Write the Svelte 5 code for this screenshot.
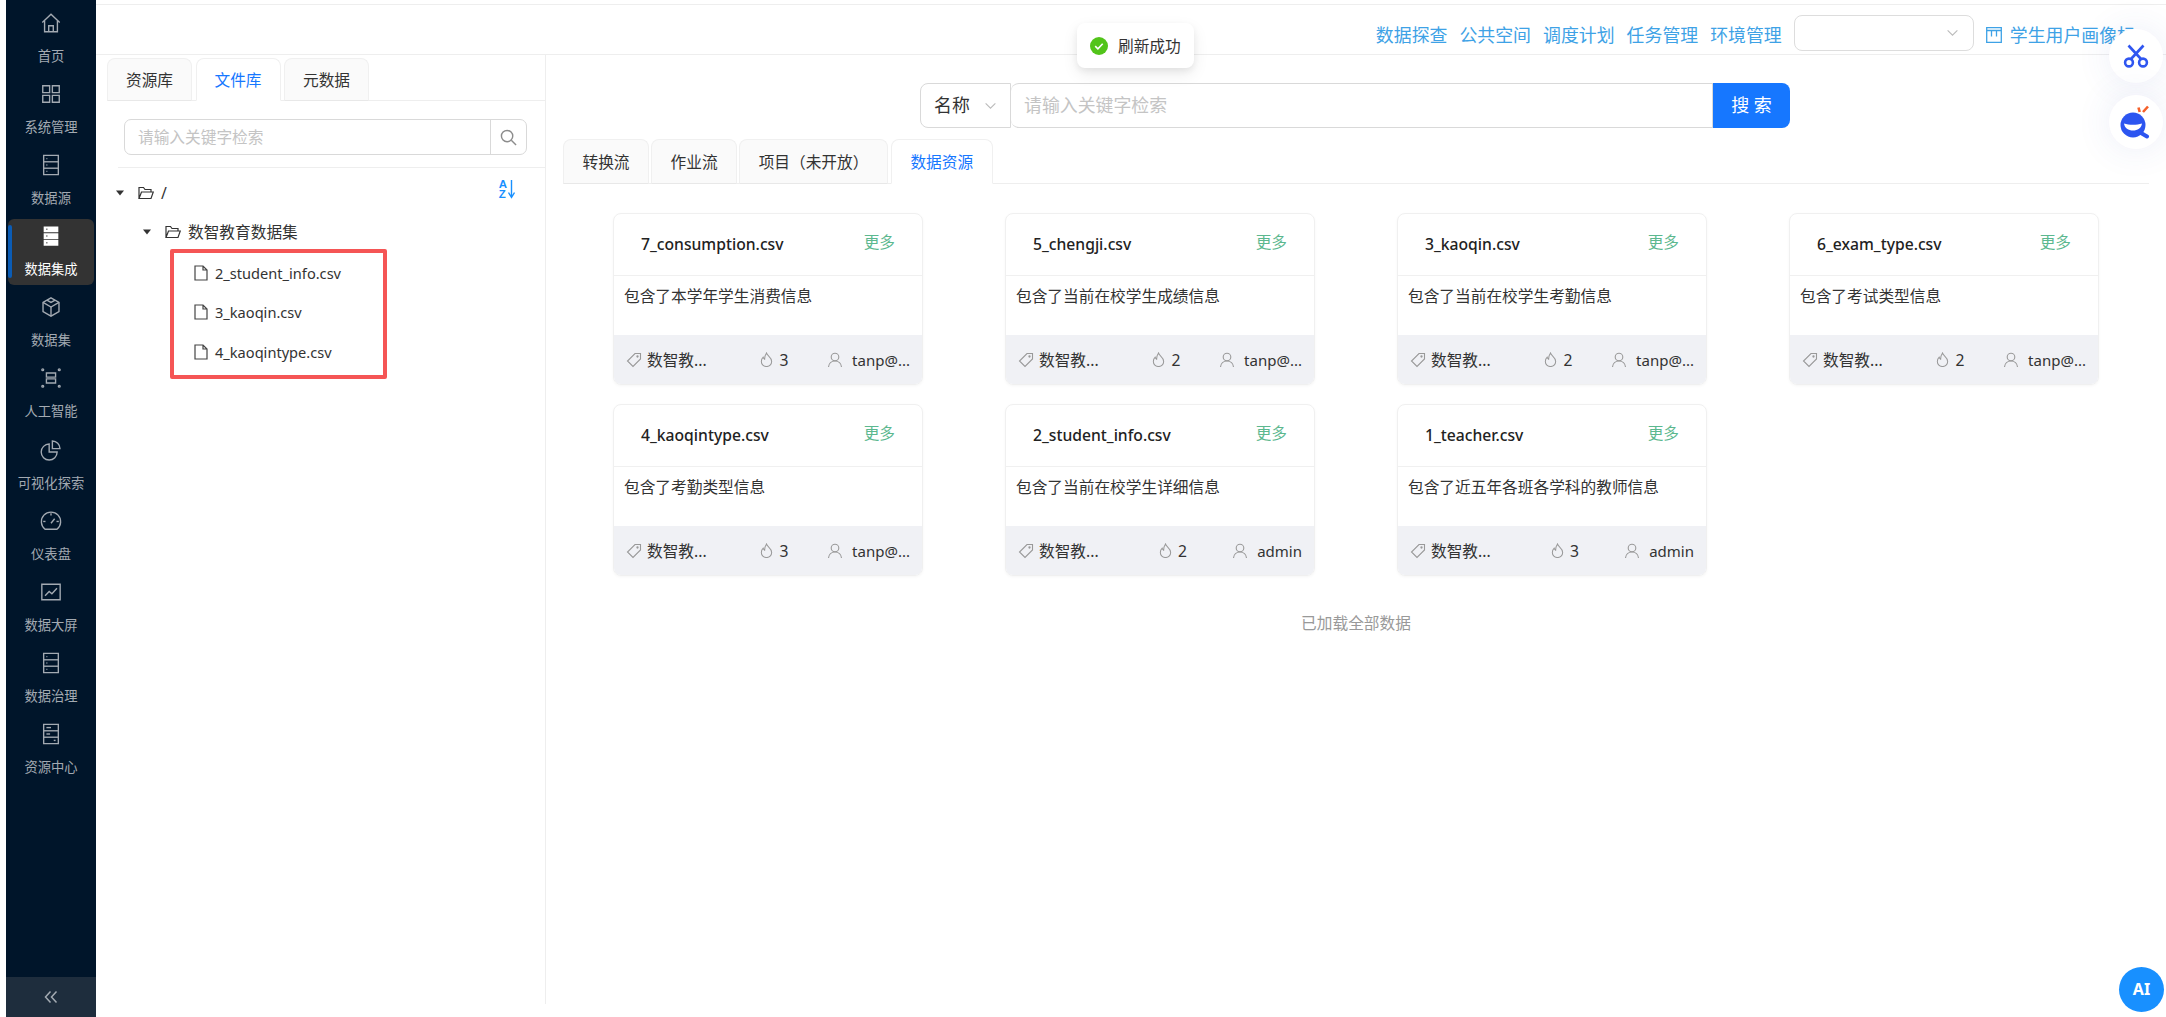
<script>
	const db = ['M4 1.5h16v21H4z', 'M4 8.5h16', 'M4 15.5h16', 'M7 5h1', 'M7 12h1', 'M7 19h1'];

	const menu = [
		{ label: '首页', paths: ['M2.5 11.5 12 2.5l9.5 9', 'M5 9.5V21.5h14V9.5', 'M9.5 21.5V15h5v6.5'] },
		{ label: '系统管理', paths: ['M3 3h7.5v7.5H3z', 'M13.5 3H21v7.5h-7.5z', 'M3 13.5h7.5V21H3z', 'M13.5 13.5H21V21h-7.5z'] },
		{ label: '数据源', paths: db },
		{ label: '数据集成', active: true },
		{ label: '数据集', paths: ['M12 2l8.7 5v10L12 22l-8.7-5V7z', 'M3.3 7 12 12l8.7-5', 'M12 12v10', 'M7.5 4.5 12 7l4.5-2.5'] },
		{
			label: '人工智能',
			paths: [
				'M7 6.5h10v4.500H7z',
				'M7 13h10v4.500H7z',
				'M2 3a1 1 0 1 0 2 0a1 1 0 1 0-2 0',
				'M20 3a1 1 0 1 0 2 0a1 1 0 1 0-2 0',
				'M2 21a1 1 0 1 0 2 0a1 1 0 1 0-2 0',
				'M20 21a1 1 0 1 0 2 0a1 1 0 1 0-2 0'
			]
		},
		{ label: '可视化探索', paths: ['M10 5.5a8.7 8.7 0 1 0 8.7 8.7H10z', 'M13.5 2.2a8.4 8.4 0 0 1 8.3 8.3h-8.3z'] },
		{ label: '仪表盘', paths: ['M5.500 21a10.500 10.500 0 1 1 13 0z', 'M12 14.500l4-5', 'M12 3.500v2.500', 'M3.500 12.500H6', 'M18 12.500h2.500'] },
		{ label: '数据大屏', paths: ['M2 3.5h20v17H2z', 'M5.5 16l4.5-4.5 3 2.5 5.5-6'] },
		{ label: '数据治理', paths: db },
		{ label: '资源中心', paths: ['M4 1.5h16v21H4z', 'M4 8.5h16', 'M4 15.5h16', 'M7 5h5', 'M7 12h4', 'M15 19h2'] }
	];

	const links = ['数据探查', '公共空间', '调度计划', '任务管理', '环境管理'];
	const files = ['2_student_info.csv', '3_kaoqin.csv', '4_kaoqintype.csv'];

	const cards = [
		{ name: '7_consumption.csv', desc: '包含了本学年学生消费信息', hot: 3, user: 'tanp@...' },
		{ name: '5_chengji.csv', desc: '包含了当前在校学生成绩信息', hot: 2, user: 'tanp@...' },
		{ name: '3_kaoqin.csv', desc: '包含了当前在校学生考勤信息', hot: 2, user: 'tanp@...' },
		{ name: '6_exam_type.csv', desc: '包含了考试类型信息', hot: 2, user: 'tanp@...' },
		{ name: '4_kaoqintype.csv', desc: '包含了考勤类型信息', hot: 3, user: 'tanp@...' },
		{ name: '2_student_info.csv', desc: '包含了当前在校学生详细信息', hot: 2, user: 'admin' },
		{ name: '1_teacher.csv', desc: '包含了近五年各班各学科的教师信息', hot: 3, user: 'admin' }
	];
</script>

<div class="page">
	<aside class="side">
		<nav class="menu">
			{#each menu as item}
				<div class="item" class:active={item.active}>
					<svg class="nav-icon" viewBox="0 0 24 24">
						{#if item.active}
							<path class="solid" d="M4 1.5h16v6.3H4z M4 8.9h16v6.3H4z M4 16.2h16v6.3H4z" />
							<path class="dots" d="M7 4.6h1 M7 12h1 M7 19.4h1" />
						{:else}
							{#each item.paths as d}
								<path {d} />
							{/each}
						{/if}
					</svg>
					<span>{item.label}</span>
				</div>
			{/each}
		</nav>
		<div class="collapse">
			<svg viewBox="0 0 14 14" width="14" height="14">
				<path d="M6.5 1.5 1.5 7l5 5.5 M12.5 1.5 7.5 7l5 5.5" />
			</svg>
		</div>
	</aside>

	<main class="main">
		<header class="head">
			{#each links as link}
				<a href="#top" class="link">{link}</a>
			{/each}
			<div class="head-select">
				<svg class="chev" viewBox="0 0 12 12"><path d="M1.5 4 6 8.5 10.5 4" /></svg>
			</div>
			<svg class="board" viewBox="0 0 16 16">
				<path d="M.7.7h14.6v14.6H.7z M.7 3.5h14.6 M5.5 3.5v6 M10.5 3.5v6" />
			</svg>
			<span class="link title">学生用户画像标</span>
		</header>

		<div class="body">
			<section class="left">
				<div class="tabs">
					<div class="tab">资源库</div>
					<div class="tab on">文件库</div>
					<div class="tab">元数据</div>
				</div>
				<div class="tree-search">
					<div class="fake-input">请输入关键字检索</div>
					<div class="search-btn">
						<svg viewBox="0 0 18 18" width="17" height="17">
							<circle cx="7.5" cy="7.5" r="6" />
							<path d="M12 12l5 5" />
						</svg>
					</div>
				</div>
				<div class="tree">
					<div class="row">
						<svg class="caret" viewBox="0 0 10 6"><path d="M1 .5h8L5 5.5z" /></svg>
						<svg class="folder" viewBox="0 0 16 14"><path d="M1 12.5V1.5h4.5l1.5 2h6v2.5 M1 12.5l2.5-6.5H15.3L13 12.5z" /></svg>
						<span>/</span>
						<div class="sort">
							<div class="az"><b>A</b><b>Z</b></div>
							<svg viewBox="0 0 7 19" width="7" height="19"><path d="M3.5 0v17 M.5 12.5l3 5 3-5" /></svg>
						</div>
					</div>
					<div class="row sub">
						<svg class="caret" viewBox="0 0 10 6"><path d="M1 .5h8L5 5.5z" /></svg>
						<svg class="folder" viewBox="0 0 16 14"><path d="M1 12.5V1.5h4.5l1.5 2h6v2.5 M1 12.5l2.5-6.5H15.3L13 12.5z" /></svg>
						<span>数智教育数据集</span>
					</div>
					<div class="files">
						{#each files as f}
							<div class="file">
								<svg viewBox="0 0 14 16" width="14" height="16">
									<path d="M1 1h8l4 4v10H1z M9 1v4h4" />
								</svg>
								<span>{f}</span>
							</div>
						{/each}
					</div>
				</div>
			</section>

			<section class="right">
				<div class="search">
					<div class="kind">
						<span>名称</span>
						<svg class="chev" viewBox="0 0 12 12"><path d="M1.5 4 6 8.5 10.5 4" /></svg>
					</div>
					<div class="keyword">请输入关键字检索</div>
					<div class="go">搜 索</div>
				</div>

				<div class="tabs wide">
					<div class="tab">转换流</div>
					<div class="tab">作业流</div>
					<div class="tab">项目（未开放）</div>
					<div class="tab on gap">数据资源</div>
				</div>

				<div class="grid">
					{#each cards as card}
						<article class="card">
							<div class="card-head">
								<strong>{card.name}</strong>
								<span class="more">更多</span>
							</div>
							<p>{card.desc}</p>
							<div class="card-foot">
								<div class="meta">
									<svg viewBox="0 0 16 16" width="16" height="16">
										<path d="M9 1.5h5.5V7l-7.5 7.5L1.5 9z" />
										<circle cx="11.5" cy="4.5" r=".6" />
									</svg>
									<span>数智教...</span>
								</div>
								<div class="meta hot">
									<svg viewBox="0 0 16 16" width="15" height="15">
										<path d="M8 1c.5 3 5.5 4.500 5.500 9a5.500 5.500 0 0 1-11 0c0-2 1-3.500 2-4.500.3 1.300.8 2 1.500 2.300C6 5.500 6.500 3 8 1z" />
									</svg>
									<span>{card.hot}</span>
								</div>
								<div class="meta who">
									<svg viewBox="0 0 16 16" width="16" height="16">
										<circle cx="8" cy="5" r="3.800" />
										<path d="M1.500 15c.3-3.500 3-6 6.500-6s6.200 2.500 6.500 6" />
									</svg>
									<span class="user">{card.user}</span>
								</div>
							</div>
						</article>
					{/each}
				</div>

				<div class="all">已加载全部数据</div>
			</section>
		</div>
	</main>

	<div class="toast">
		<svg viewBox="0 0 18 18" width="18" height="18">
			<circle cx="9" cy="9" r="9" fill="#52c41a" />
			<path d="M5.200 9.200l2.700 2.600 4.800-5" fill="none" stroke="#fff" stroke-width="1.600" />
		</svg>
		<span>刷新成功</span>
	</div>

	<div class="float one">
		<svg viewBox="0 0 26 24" width="26" height="24">
			<g fill="none" stroke="#3056f0" stroke-width="2.600">
				<circle cx="6" cy="18.500" r="3.900" />
				<circle cx="20" cy="18.500" r="3.900" />
				<path d="M8 15 20.500 1.500 M18 15 5.500 1.500" />
			</g>
		</svg>
	</div>
	<div class="float two">
		<svg viewBox="0 0 34 34" width="34" height="34">
			<circle cx="14" cy="20" r="12.500" fill="#2c55f0" />
			<path d="M22 28l6 3.500" stroke="#2c55f0" stroke-width="4" stroke-linecap="round" />
			<path d="M5 18.500c5 1.800 13 1.800 18 0-.5 4.500-4.500 7-9 7s-8.500-2.500-9-7z" fill="#fff" />
			<path d="M19.500 2.500l1.200 4.500 M29 1.500l-5 5.500" stroke="#f5602a" stroke-width="2.600" />
		</svg>
	</div>
	<div class="ai">AI</div>
</div>

<style>
	:global(body) {
		margin: 0;
		background: #fff;
	}

	.page {
		position: relative;
		display: flex;
		height: 1017px;
		padding-left: 6px;
		box-sizing: border-box;
		overflow: hidden;
		font-family: 'Noto Sans', 'Noto Sans CJK SC', sans-serif;
		font-size: 15.7px;
		color: #333;
	}

	.side {
		display: flex;
		flex-direction: column;
		flex: none;
		width: 90px;
		background: #00152a;
	}

	.menu {
		flex: 1;
		padding: 6px 2px 0;
	}

	.item {
		position: relative;
		display: flex;
		flex-direction: column;
		align-items: center;
		box-sizing: border-box;
		height: 65.500px;
		margin-bottom: 5.600px;
		padding-top: 6px;
		border-radius: 6px;
		color: #a3aab2;
		font-size: 13.300px;
		line-height: 20px;
	}

	.item span {
		margin-top: 12px;
		white-space: nowrap;
	}

	.item.active {
		background: #333;
		color: #fff;
	}

	.item.active::before {
		content: '';
		position: absolute;
		left: 0;
		top: 6px;
		bottom: 7px;
		width: 4px;
		border-radius: 2px;
		background: #0b5cb5;
	}

	.nav-icon {
		width: 22px;
		height: 22px;
		fill: none;
		stroke: currentColor;
		stroke-width: 1.500;
	}

	.nav-icon .solid {
		fill: #fff;
		stroke: none;
	}

	.nav-icon .dots {
		stroke: #333;
	}

	.collapse {
		display: flex;
		align-items: center;
		justify-content: center;
		height: 40px;
		background: #1e2d3d;
	}

	.collapse path {
		fill: none;
		stroke: #a3aab2;
		stroke-width: 1.500;
	}

	.main {
		display: flex;
		flex-direction: column;
		flex: 1;
		min-width: 0;
	}

	.head {
		display: flex;
		align-items: center;
		flex: none;
		box-sizing: border-box;
		height: 51px;
		margin-top: 4px;
		padding: 6px 31px 0 0;
		justify-content: flex-end;
		gap: 12px;
		border-top: 1px solid #eee;
		border-bottom: 1px solid #eee;
	}

	.link {
		margin-top: 4px;
		color: #3ea2e6;
		font-size: 17.900px;
		line-height: 24px;
		text-decoration: none;
		white-space: nowrap;
	}

	.head-select {
		display: flex;
		align-items: center;
		justify-content: flex-end;
		box-sizing: border-box;
		width: 180px;
		height: 36px;
		padding-right: 14px;
		border: 1px solid #ddd;
		border-radius: 8px;
	}

	.chev {
		width: 13px;
		height: 13px;
		fill: none;
		stroke: #bbb;
		stroke-width: 1;
	}

	.board {
		width: 16px;
		height: 16px;
		margin-top: 4px;
		fill: none;
		stroke: #3ea2e6;
		stroke-width: 1.300;
	}

	.title {
		margin-left: -4px;
	}

	.body {
		display: flex;
		flex: 1;
		min-height: 0;
		margin-bottom: 13px;
	}

	.left {
		flex: none;
		box-sizing: border-box;
		width: 450px;
		padding-top: 3px;
		border-right: 1px solid #eee;
		padding-left: 11px;
	}

	.tabs {
		display: flex;
		gap: 3.500px;
		height: 43px;
		box-sizing: border-box;
		border-bottom: 1px solid #eee;
	}

	.tab {
		display: flex;
		align-items: center;
		justify-content: center;
		box-sizing: border-box;
		width: 85px;
		height: 43px;
		padding: 0 18.500px;
		border: 1px solid #f0f0f0;
		border-bottom: 1px solid #e8e8e8;
		border-radius: 8px 8px 0 0;
		background: #fafafa;
		white-space: nowrap;
		line-height: 22px;
	}

	.tab.on {
		background: #fff;
		border-bottom-color: #fff;
		color: #1677ff;
	}

	.tree-search {
		display: flex;
		box-sizing: border-box;
		width: 403px;
		height: 36px;
		margin: 18px 0 12px 17px;
		border: 1px solid #d9d9d9;
		border-radius: 7px;
		line-height: 34px;
	}

	.fake-input {
		flex: 1;
		padding-left: 13px;
		color: #c4c4c4;
	}

	.search-btn {
		display: flex;
		align-items: center;
		justify-content: center;
		width: 35px;
		border-left: 1px solid #d9d9d9;
	}

	.search-btn svg {
		fill: none;
		stroke: #8c8c8c;
		stroke-width: 1.500;
	}

	.tree {
		margin-left: 11px;
		padding-top: 5px;
		border-top: 1px solid #eee;
	}

	.row {
		display: flex;
		align-items: center;
		height: 39.500px;
		margin-left: -3px;
		line-height: 22px;
	}

	.row.sub {
		padding-left: 27px;
	}

	.caret {
		width: 10px;
		height: 6px;
		fill: #333;
		margin-right: 13px;
	}

	.folder {
		width: 16px;
		height: 14px;
		margin-right: 7px;
		fill: none;
		stroke: #333;
		stroke-width: 1.200;
	}

	.sort {
		display: flex;
		align-items: flex-start;
		align-self: flex-start;
		margin: 7px 30px 0 auto;
		gap: 1px;
	}

	.sort path {
		fill: none;
		stroke: #1890ff;
		stroke-width: 1.400;
	}

	.az {
		display: flex;
		flex-direction: column;
		color: #1890ff;
		font-size: 11.500px;
		line-height: 9.500px;
		font-family: 'Liberation Sans', sans-serif;
	}

	.files {
		box-sizing: border-box;
		width: 217px;
		height: 130px;
		margin: -3px 0 0 52px;
		border: 4px solid #f55555;
		border-radius: 2px;
	}

	.file {
		display: flex;
		align-items: center;
		gap: 7px;
		height: 39.500px;
		padding-left: 20px;
		font-size: 14.600px;
		line-height: 22px;
	}

	.file svg {
		fill: none;
		stroke: #444;
		stroke-width: 1.200;
	}

	.right {
		flex: 1;
		min-width: 0;
		padding: 28px 17px 0;
	}

	.search {
		display: flex;
		width: 870px;
		height: 45px;
		margin: 0 0 11px 357px;
		font-size: 17.900px;
		line-height: 43px;
	}

	.kind {
		display: flex;
		align-items: center;
		justify-content: space-between;
		box-sizing: border-box;
		width: 91px;
		padding: 0 13px;
		border: 1px solid #d9d9d9;
		border-radius: 8px 0 0 8px;
	}

	.keyword {
		flex: 1;
		box-sizing: border-box;
		padding-left: 13px;
		border: 1px solid #d9d9d9;
		border-left: none;
		border-radius: 8px 0 0 8px;
		color: #c4c4c4;
	}

	.go {
		width: 77px;
		background: #1677ff;
		color: #fff;
		text-align: center;
		border-radius: 0 8px 8px 0;
		font-size: 18px;
		line-height: 45px;
	}

	.wide {
		height: 45px;
		gap: 2px;
	}

	.wide .tab {
		width: auto;
		height: 45px;
	}

	.wide .gap {
		margin-left: 1px;
	}

	.grid {
		display: grid;
		grid-template-columns: repeat(4, 310px);
		gap: 19px 82px;
		margin: 29px 0 0 50px;
	}

	.card {
		display: flex;
		flex-direction: column;
		box-sizing: border-box;
		height: 172px;
		border: 1px solid #f0f0f0;
		border-radius: 8px;
		overflow: hidden;
		box-shadow: 0 1px 3px rgba(0, 0, 0, 0.04);
	}

	.card-head {
		display: flex;
		justify-content: space-between;
		align-items: center;
		flex: none;
		box-sizing: border-box;
		height: 62px;
		padding: 0 27px 2px;
		border-bottom: 1px solid #f0f0f0;
		line-height: 22px;
	}

	.card-head strong {
		font-weight: 500;
		color: #222;
	}

	.more {
		color: #5cb88f;
		margin-top: -3px;
	}

	.card p {
		flex: 1;
		margin: 0;
		padding: 9px 10px 0;
		line-height: 22px;
	}

	.card-foot {
		display: flex;
		justify-content: space-between;
		align-items: center;
		flex: none;
		height: 49px;
		padding: 0 12px;
		background: #f0f1f5;
		line-height: 22px;
	}

	.meta {
		display: flex;
		align-items: center;
		gap: 5px;
	}

	.meta svg {
		fill: none;
		stroke: #999;
		stroke-width: 1.100;
	}

	.hot {
		margin-left: 14px;
	}

	.who {
		gap: 9px;
	}

	.user {
		font-size: 15px;
	}

	.all {
		margin-top: 36px;
		text-align: center;
		color: #999;
		line-height: 22px;
	}

	.toast {
		position: absolute;
		left: 1077px;
		top: 23px;
		display: flex;
		align-items: center;
		gap: 10px;
		box-sizing: border-box;
		width: 117px;
		height: 45px;
		padding-left: 13px;
		border-radius: 8px;
		background: #fff;
		box-shadow: 0 6px 16px rgba(0, 0, 0, 0.08), 0 3px 6px rgba(0, 0, 0, 0.06);
	}

	.float {
		position: absolute;
		left: 2109px;
		display: flex;
		align-items: center;
		justify-content: center;
		width: 54px;
		height: 54px;
		border-radius: 50%;
		background: #fff;
		box-shadow: 0 0 36px rgba(60, 80, 180, 0.1);
	}

	.one {
		top: 29px;
	}

	.two {
		top: 95px;
	}

	.ai {
		position: absolute;
		left: 2119px;
		top: 967px;
		width: 45px;
		height: 45px;
		border-radius: 50%;
		background: #1890ff;
		color: #fff;
		font-weight: 700;
		font-size: 16px;
		line-height: 45px;
		text-align: center;
	}
</style>
